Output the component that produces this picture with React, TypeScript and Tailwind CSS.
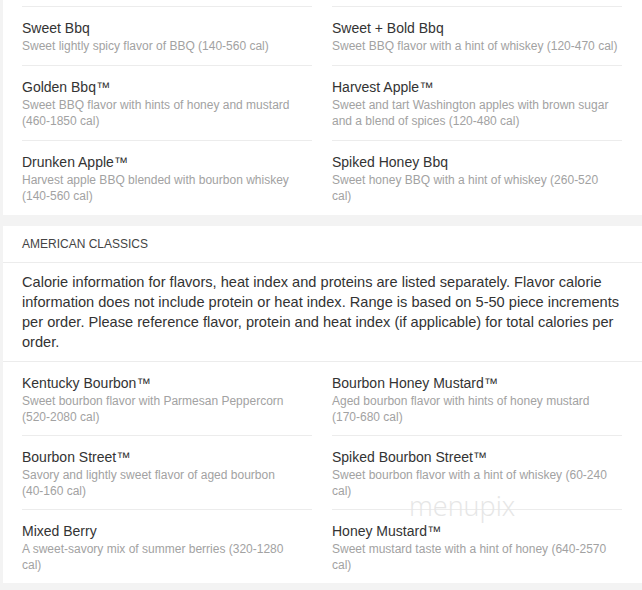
import React from "react";

type Item = { t: string; d: string[] };

const top: Item[][] = [
  [
    { t: "Sweet Bbq", d: ["Sweet lightly spicy flavor of BBQ (140-560 cal)"] },
    { t: "Sweet + Bold Bbq", d: ["Sweet BBQ flavor with a hint of whiskey (120-470 cal)"] },
  ],
  [
    { t: "Golden Bbq™", d: ["Sweet BBQ flavor with hints of honey and mustard", "(460-1850 cal)"] },
    { t: "Harvest Apple™", d: ["Sweet and tart Washington apples with brown sugar", "and a blend of spices (120-480 cal)"] },
  ],
  [
    { t: "Drunken Apple™", d: ["Harvest apple BBQ blended with bourbon whiskey", "(140-560 cal)"] },
    { t: "Spiked Honey Bbq", d: ["Sweet honey BBQ with a hint of whiskey (260-520", "cal)"] },
  ],
];

const classics: Item[][] = [
  [
    { t: "Kentucky Bourbon™", d: ["Sweet bourbon flavor with Parmesan Peppercorn", "(520-2080 cal)"] },
    { t: "Bourbon Honey Mustard™", d: ["Aged bourbon flavor with hints of honey mustard", "(170-680 cal)"] },
  ],
  [
    { t: "Bourbon Street™", d: ["Savory and lightly sweet flavor of aged bourbon", "(40-160 cal)"] },
    { t: "Spiked Bourbon Street™", d: ["Sweet bourbon flavor with a hint of whiskey (60-240", "cal)"] },
  ],
  [
    { t: "Mixed Berry", d: ["A sweet-savory mix of summer berries (320-1280", "cal)"] },
    { t: "Honey Mustard™", d: ["Sweet mustard taste with a hint of honey (640-2570", "cal)"] },
  ],
];

function Cell({ item, border, pb }: { item: Item; border: boolean; pb: string }) {
  return (
    <div className={(border ? "border-t border-[#ececec] " : "") + "pt-[11px] " + pb}>
      <div className="text-[14px] leading-5 text-[#333]">{item.t}</div>
      {item.d.map((line, k) => (
        <div key={k} className="text-[12px] leading-4 text-[#a2a2a2] whitespace-nowrap">
          {line}
        </div>
      ))}
    </div>
  );
}

const para = [
  "Calorie information for flavors, heat index and proteins are listed separately. Flavor calorie",
  "information does not include protein or heat index. Range is based on 5-50 piece increments",
  "per order. Please reference flavor, protein and heat index (if applicable) for total calories per",
  "order.",
];

export default function App() {
  return (
    <div
      className="w-[642px] h-[590px] overflow-hidden bg-[#f3f3f3] relative"
      style={{ fontFamily: '"Liberation Sans", Arial, sans-serif' }}
    >
      <div className="ml-[3px] bg-white pl-[19px] pr-[20px]">
        <div className="h-[6px]" />
        <div className="grid grid-cols-2 gap-x-5">
          {top.map((row, i) =>
            row.map((it, j) => <Cell key={i + "-" + j} item={it} border={true} pb="pb-[11px]" />)
          )}
        </div>
      </div>
      <div className="h-[11px]" />
      <div className="ml-[3px] bg-white">
        <div className="px-[19px] py-[10px] text-[12px] leading-4 text-[#444] border-b border-[#ececec]">
          AMERICAN CLASSICS
        </div>
        <div className="pl-[19px] pr-[20px] pt-[9px] pb-[9px] text-[14.6px] leading-5 text-[#333] border-b border-[#ececec]">
          {para.map((l, k) => (
            <div key={k} className="whitespace-nowrap">
              {l}
            </div>
          ))}
        </div>
        <div className="pl-[19px] pr-[20px] grid grid-cols-2 gap-x-5">
          {classics.map((row, i) =>
            row.map((it, j) => <Cell key={i + "-" + j} item={it} border={i > 0} pb="pb-[10px]" />)
          )}
        </div>
      </div>
      <div
        className="absolute left-[409px] top-[490px] text-[27px] leading-8 text-[#e6e6e6] font-light select-none pointer-events-none"
        style={{ fontFamily: '"Open Sans", sans-serif' }}
      >
        menupix
      </div>
    </div>
  );
}
